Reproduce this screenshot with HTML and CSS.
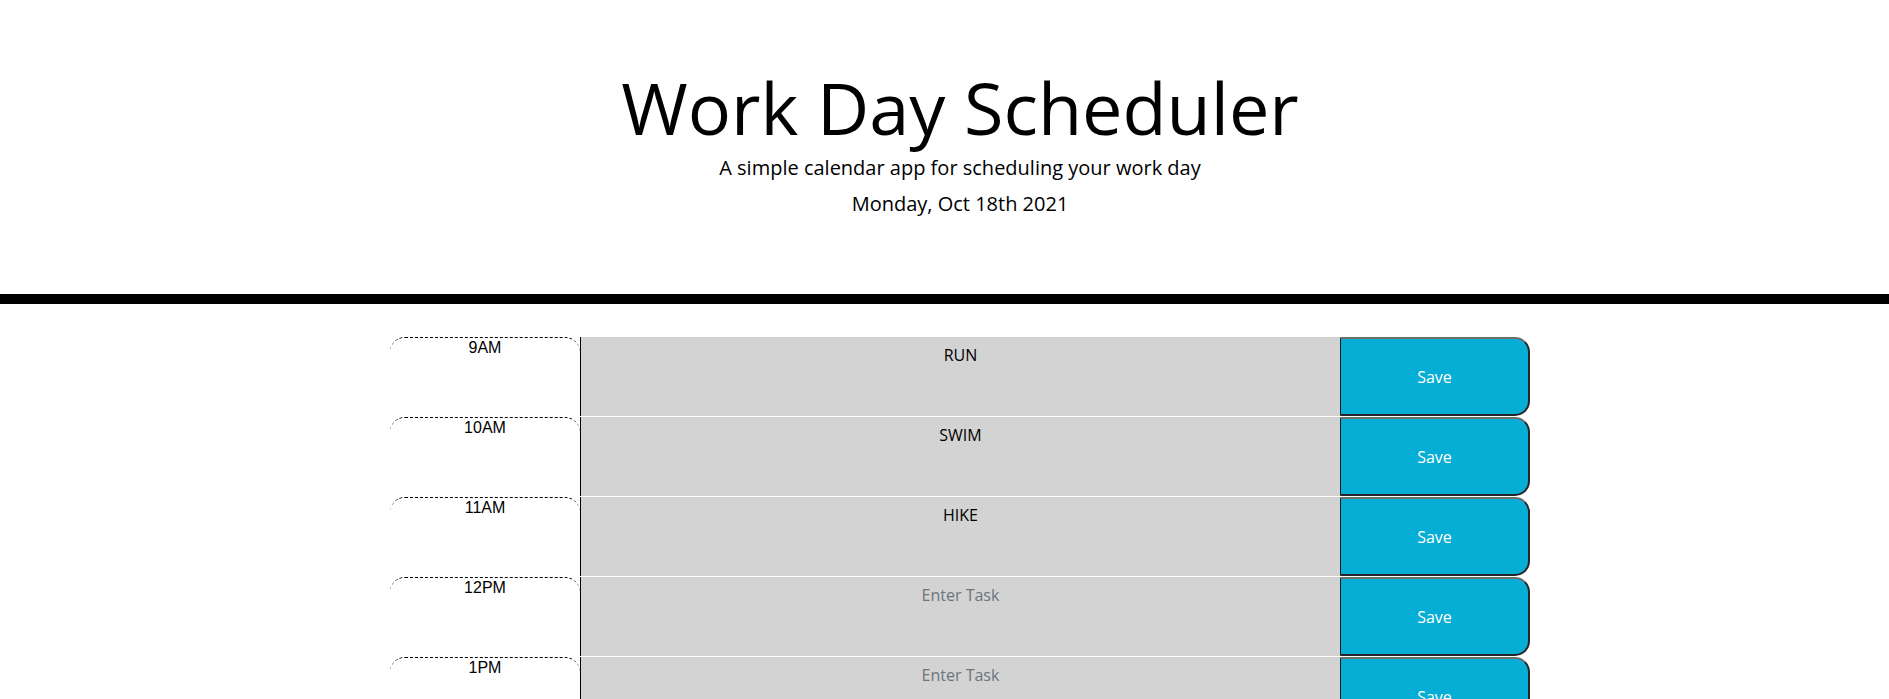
FILE: index.html
```html
<!DOCTYPE html>
<html lang="en">
<head>
<meta charset="utf-8">
<title>Work Day Scheduler</title>
<link rel="stylesheet" href="styles.css">
</head>
<body>
<header class="jumbotron">
  <h1 class="display-3">Work Day Scheduler</h1>
  <p class="lead">A simple calendar app for scheduling your work day</p>
  <p class="lead" id="currentDay">Monday, Oct 18th 2021</p>
</header>
<main class="wrapper">
  <div class="container">
    <div class="row time-block">
      <div class="hour">9AM</div>
      <textarea class="description past" placeholder="Enter Task">RUN</textarea>
      <button class="saveBtn">Save</button>
    </div>
    <div class="row time-block">
      <div class="hour">10AM</div>
      <textarea class="description past" placeholder="Enter Task">SWIM</textarea>
      <button class="saveBtn">Save</button>
    </div>
    <div class="row time-block">
      <div class="hour">11AM</div>
      <textarea class="description past" placeholder="Enter Task">HIKE</textarea>
      <button class="saveBtn">Save</button>
    </div>
    <div class="row time-block">
      <div class="hour">12PM</div>
      <textarea class="description past" placeholder="Enter Task"></textarea>
      <button class="saveBtn">Save</button>
    </div>
    <div class="row time-block">
      <div class="hour">1PM</div>
      <textarea class="description past" placeholder="Enter Task"></textarea>
      <button class="saveBtn">Save</button>
    </div>
    <div class="row time-block">
      <div class="hour">2PM</div>
      <textarea class="description past" placeholder="Enter Task"></textarea>
      <button class="saveBtn">Save</button>
    </div>
    <div class="row time-block">
      <div class="hour">3PM</div>
      <textarea class="description past" placeholder="Enter Task"></textarea>
      <button class="saveBtn">Save</button>
    </div>
    <div class="row time-block">
      <div class="hour">4PM</div>
      <textarea class="description past" placeholder="Enter Task"></textarea>
      <button class="saveBtn">Save</button>
    </div>
    <div class="row time-block">
      <div class="hour">5PM</div>
      <textarea class="description past" placeholder="Enter Task"></textarea>
      <button class="saveBtn">Save</button>
    </div>
  </div>
</main>
</body>
</html>
```
FILE: styles.css
```css
html {
  overflow: hidden;
}
*, *::before, *::after {
  box-sizing: border-box;
}
body {
  margin: 0;
  font-family: "Open Sans", sans-serif;
  font-size: 16px;
  line-height: 1;
  color: #000;
  background: #fff;
}
.jumbotron {
  text-align: center;
  padding: 64px 32px 64px 63px;
  margin-bottom: 32px;
  border-bottom: 10px solid #000;
}
.display-3 {
  font-size: 72px;
  font-weight: 400;
  line-height: 1.2;
  margin: 0 0 8px;
}
.lead {
  font-size: 20px;
  font-weight: 400;
  line-height: 20px;
  margin: 0 0 16px;
}
.wrapper {
  padding-left: 31px;
}
.container {
  width: 1140px;
  margin: 0 auto;
}
.row {
  display: flex;
  height: 80px;
  border-top: 1px solid #fff;
}
.hour {
  width: 190px;
  flex: none;
  text-align: center;
  font-family: "Liberation Sans", Arial, sans-serif;
  font-size: 16px;
  line-height: 1;
  padding-top: 2px;
  background: #fff;
  color: #000;
  border-top: 1px dashed #000;
  border-radius: 15px 15px 0 0;
}
.description {
  width: 760px;
  flex: none;
  margin: 0;
  padding: 10px;
  border: none;
  border-left: 1px solid #000;
  resize: none;
  background: transparent;
  color: #000;
  font-family: "Open Sans", sans-serif;
  font-size: 16px;
  line-height: 1;
  text-align: center;
  outline: none;
}
.description::placeholder {
  color: #6c757d;
  opacity: 1;
}
.past {
  background-color: #d3d3d3;
}
.saveBtn {
  width: 190px;
  flex: none;
  margin: 0;
  padding: 0;
  background-color: #06aed5;
  color: #fff;
  font-family: "Open Sans", sans-serif;
  font-size: 16px;
  line-height: 1;
  border-style: solid;
  border-width: 2px 2px 2px 1px;
  border-color: #6e6e6e #262626 #262626 #1a1a1a;
  border-radius: 0 15px 15px 0;
  cursor: pointer;
}
```
